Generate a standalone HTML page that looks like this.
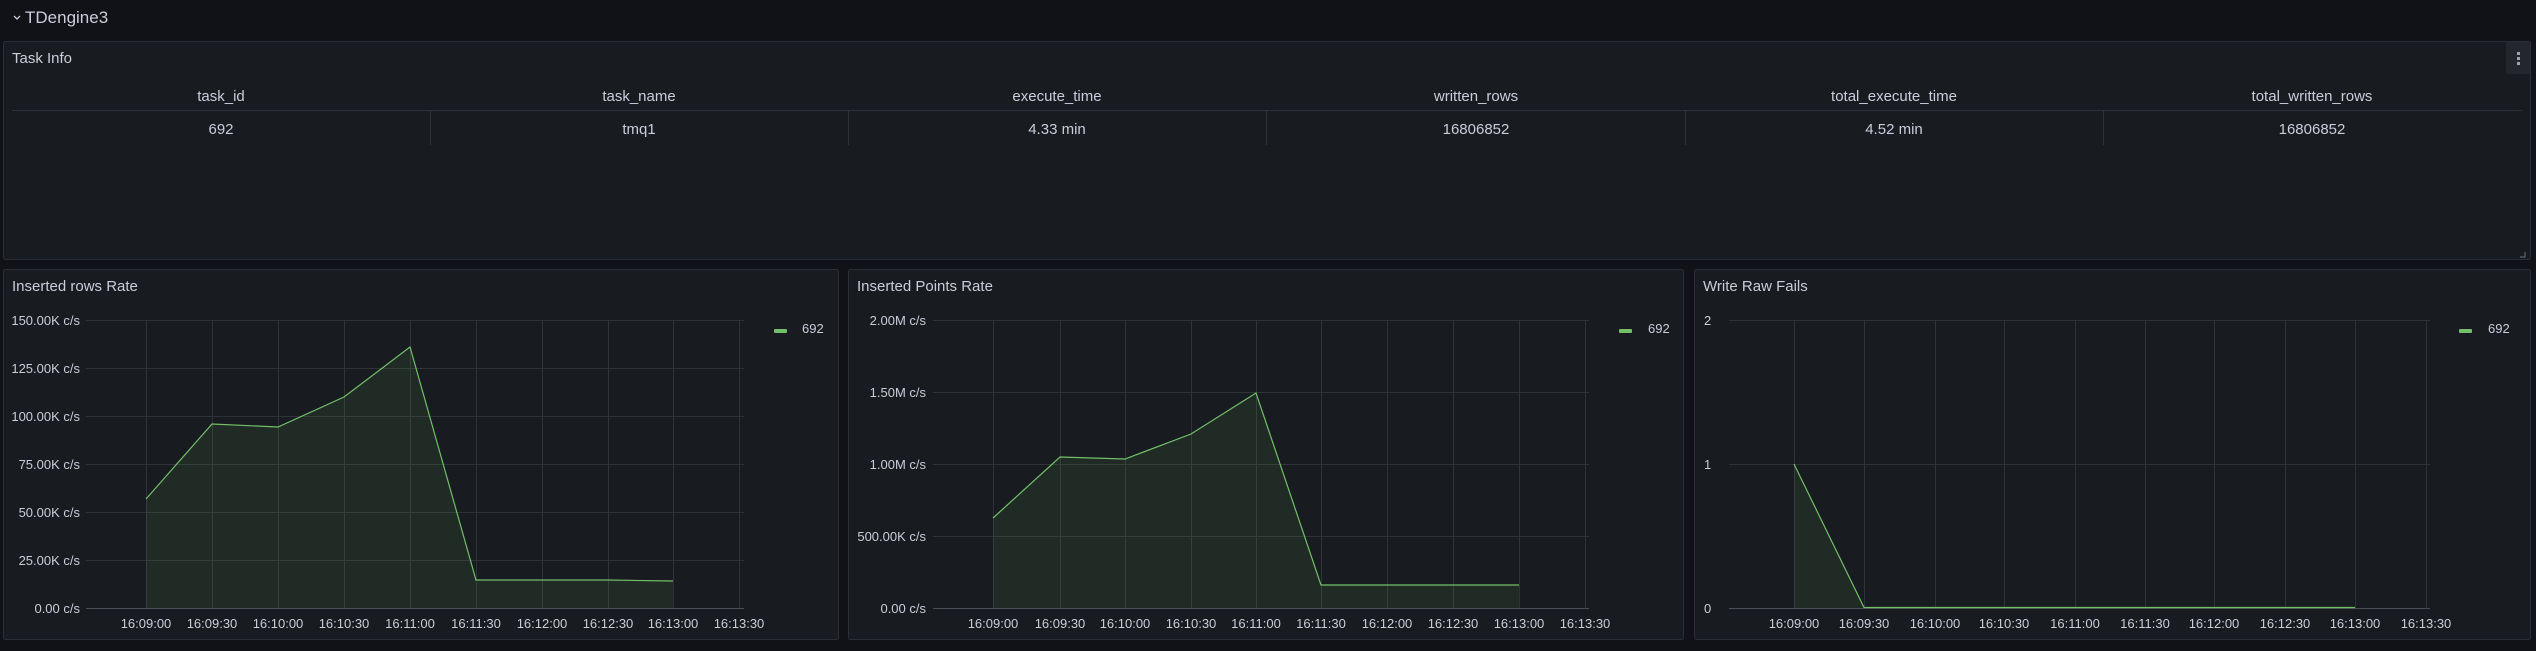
<!DOCTYPE html>
<html><head><meta charset="utf-8"><style>
html,body{margin:0;padding:0;background:#111217;width:2536px;height:651px;overflow:hidden}
svg{display:block}
text{font-family:"Liberation Sans",sans-serif;fill:#ccccdc}
</style></head><body>
<svg width="2536" height="651" viewBox="0 0 2536 651" xmlns="http://www.w3.org/2000/svg">
<rect width="2536" height="651" fill="#111217"/>
<!-- row header -->
<path d="M14 16 l3 3 l3 -3" stroke="#ccccdc" stroke-width="1.3" fill="none"/>
<text x="25" y="23" font-size="17">TDengine3</text>

<!-- Task Info panel -->
<rect x="3.5" y="41.5" width="2527" height="218" rx="2" fill="#181b1f" stroke="#2b2e34"/>
<text x="12" y="63" font-size="15">Task Info</text>
<rect x="2506" y="42" width="24" height="32" rx="2" fill="#23262c"/>
<rect x="2517" y="52" width="3" height="3" fill="#9fa2ab"/>
<rect x="2517" y="57" width="3" height="3" fill="#9fa2ab"/>
<rect x="2517" y="62" width="3" height="3" fill="#9fa2ab"/>
<line x1="12" y1="110.5" x2="2522" y2="110.5" stroke="#2e3138"/>
<g stroke="#2e3138">
<line x1="430.5" y1="111" x2="430.5" y2="145"/>
<line x1="848.5" y1="111" x2="848.5" y2="145"/>
<line x1="1266.5" y1="111" x2="1266.5" y2="145"/>
<line x1="1685.5" y1="111" x2="1685.5" y2="145"/>
<line x1="2103.5" y1="111" x2="2103.5" y2="145"/>
</g>
<g font-size="15" text-anchor="middle">
<text x="221" y="101">task_id</text>
<text x="639" y="101">task_name</text>
<text x="1057" y="101">execute_time</text>
<text x="1476" y="101">written_rows</text>
<text x="1894" y="101">total_execute_time</text>
<text x="2312" y="101">total_written_rows</text>
<text x="221" y="134">692</text>
<text x="639" y="134">tmq1</text>
<text x="1057" y="134">4.33 min</text>
<text x="1476" y="134">16806852</text>
<text x="1894" y="134">4.52 min</text>
<text x="2312" y="134">16806852</text>
</g>
<path d="M2525 252 v5 h-5" stroke="#6e7079" fill="none" stroke-width="1"/>

<!-- Panel 1 -->
<rect x="3.5" y="269.5" width="835" height="370" rx="2" fill="#181b1f" stroke="#2b2e34"/>
<text x="12" y="291" font-size="15">Inserted rows Rate</text>
<g stroke="#2f3237" stroke-width="1">
<line x1="86" y1="320.5" x2="744" y2="320.5"/><line x1="86" y1="368.5" x2="744" y2="368.5"/>
<line x1="86" y1="416.5" x2="744" y2="416.5"/><line x1="86" y1="464.5" x2="744" y2="464.5"/>
<line x1="86" y1="512.5" x2="744" y2="512.5"/><line x1="86" y1="560.5" x2="744" y2="560.5"/>
<line x1="146.5" y1="320" x2="146.5" y2="608"/><line x1="212.5" y1="320" x2="212.5" y2="608"/>
<line x1="278.5" y1="320" x2="278.5" y2="608"/><line x1="344.5" y1="320" x2="344.5" y2="608"/>
<line x1="410.5" y1="320" x2="410.5" y2="608"/><line x1="476.5" y1="320" x2="476.5" y2="608"/>
<line x1="542.5" y1="320" x2="542.5" y2="608"/><line x1="608.5" y1="320" x2="608.5" y2="608"/>
<line x1="673.5" y1="320" x2="673.5" y2="608"/><line x1="739.5" y1="320" x2="739.5" y2="608"/>
</g>
<line x1="86" y1="608.5" x2="744" y2="608.5" stroke="#4a4d54"/>
<path d="M146 499 L212 424 L278 427 L344 397 L410 347 L476 580 L542 580 L608 580 L673 581 L673 608 L146 608 Z" fill="rgba(115,191,105,0.1)"/>
<path d="M146 499 L212 424 L278 427 L344 397 L410 347 L476 580 L542 580 L608 580 L673 581" fill="none" stroke="#73bf69" stroke-width="1.2"/>
<g font-size="13" text-anchor="end">
<text x="80" y="325">150.00K c/s</text><text x="80" y="373">125.00K c/s</text>
<text x="80" y="421">100.00K c/s</text><text x="80" y="469">75.00K c/s</text>
<text x="80" y="517">50.00K c/s</text><text x="80" y="565">25.00K c/s</text>
<text x="80" y="613">0.00 c/s</text>
</g>
<g font-size="13" text-anchor="middle">
<text x="146" y="628">16:09:00</text><text x="212" y="628">16:09:30</text><text x="278" y="628">16:10:00</text>
<text x="344" y="628">16:10:30</text><text x="410" y="628">16:11:00</text><text x="476" y="628">16:11:30</text>
<text x="542" y="628">16:12:00</text><text x="608" y="628">16:12:30</text><text x="673" y="628">16:13:00</text>
<text x="739" y="628">16:13:30</text>
</g>
<rect x="774" y="329" width="13" height="4" rx="1" fill="#73bf69"/>
<text x="802" y="333" font-size="13">692</text>

<!-- Panel 2 -->
<rect x="848.5" y="269.5" width="835" height="370" rx="2" fill="#181b1f" stroke="#2b2e34"/>
<text x="857" y="291" font-size="15">Inserted Points Rate</text>
<g stroke="#2f3237" stroke-width="1">
<line x1="933" y1="320.5" x2="1589" y2="320.5"/><line x1="933" y1="392.5" x2="1589" y2="392.5"/>
<line x1="933" y1="464.5" x2="1589" y2="464.5"/><line x1="933" y1="536.5" x2="1589" y2="536.5"/>
<line x1="993.5" y1="320" x2="993.5" y2="608"/><line x1="1060.5" y1="320" x2="1060.5" y2="608"/>
<line x1="1125.5" y1="320" x2="1125.5" y2="608"/><line x1="1191.5" y1="320" x2="1191.5" y2="608"/>
<line x1="1256.5" y1="320" x2="1256.5" y2="608"/><line x1="1321.5" y1="320" x2="1321.5" y2="608"/>
<line x1="1387.5" y1="320" x2="1387.5" y2="608"/><line x1="1453.5" y1="320" x2="1453.5" y2="608"/>
<line x1="1519.5" y1="320" x2="1519.5" y2="608"/><line x1="1585.5" y1="320" x2="1585.5" y2="608"/>
</g>
<line x1="933" y1="608.5" x2="1589" y2="608.5" stroke="#4a4d54"/>
<path d="M993 518 L1060 457 L1125 459 L1191 434 L1256 393 L1321 585 L1387 585 L1453 585 L1519 585 L1519 608 L993 608 Z" fill="rgba(115,191,105,0.1)"/>
<path d="M993 518 L1060 457 L1125 459 L1191 434 L1256 393 L1321 585 L1387 585 L1453 585 L1519 585" fill="none" stroke="#73bf69" stroke-width="1.2"/>
<g font-size="13" text-anchor="end">
<text x="926" y="325">2.00M c/s</text><text x="926" y="397">1.50M c/s</text>
<text x="926" y="469">1.00M c/s</text><text x="926" y="541">500.00K c/s</text>
<text x="926" y="613">0.00 c/s</text>
</g>
<g font-size="13" text-anchor="middle">
<text x="993" y="628">16:09:00</text><text x="1060" y="628">16:09:30</text><text x="1125" y="628">16:10:00</text>
<text x="1191" y="628">16:10:30</text><text x="1256" y="628">16:11:00</text><text x="1321" y="628">16:11:30</text>
<text x="1387" y="628">16:12:00</text><text x="1453" y="628">16:12:30</text><text x="1519" y="628">16:13:00</text>
<text x="1585" y="628">16:13:30</text>
</g>
<rect x="1619" y="329" width="13" height="4" rx="1" fill="#73bf69"/>
<text x="1648" y="333" font-size="13">692</text>

<!-- Panel 3 -->
<rect x="1694.5" y="269.5" width="836" height="370" rx="2" fill="#181b1f" stroke="#2b2e34"/>
<text x="1703" y="291" font-size="15">Write Raw Fails</text>
<g stroke="#2f3237" stroke-width="1">
<line x1="1729" y1="320.5" x2="2430" y2="320.5"/><line x1="1729" y1="464.5" x2="2430" y2="464.5"/>
<line x1="1794.5" y1="320" x2="1794.5" y2="608"/><line x1="1864.5" y1="320" x2="1864.5" y2="608"/>
<line x1="1935.5" y1="320" x2="1935.5" y2="608"/><line x1="2004.5" y1="320" x2="2004.5" y2="608"/>
<line x1="2075.5" y1="320" x2="2075.5" y2="608"/><line x1="2145.5" y1="320" x2="2145.5" y2="608"/>
<line x1="2214.5" y1="320" x2="2214.5" y2="608"/><line x1="2285.5" y1="320" x2="2285.5" y2="608"/>
<line x1="2355.5" y1="320" x2="2355.5" y2="608"/><line x1="2426.5" y1="320" x2="2426.5" y2="608"/>
</g>
<line x1="1729" y1="608.5" x2="2430" y2="608.5" stroke="#4a4d54"/>
<path d="M1794 464 L1864 608 L1794 608 Z" fill="rgba(115,191,105,0.1)"/>
<path d="M1794 464 L1864 607.5 L2355 607.5" fill="none" stroke="#73bf69" stroke-width="1.2"/>
<g font-size="13">
<text x="1704" y="325">2</text><text x="1704" y="469">1</text><text x="1704" y="613">0</text>
</g>
<g font-size="13" text-anchor="middle">
<text x="1794" y="628">16:09:00</text><text x="1864" y="628">16:09:30</text><text x="1935" y="628">16:10:00</text>
<text x="2004" y="628">16:10:30</text><text x="2075" y="628">16:11:00</text><text x="2145" y="628">16:11:30</text>
<text x="2214" y="628">16:12:00</text><text x="2285" y="628">16:12:30</text><text x="2355" y="628">16:13:00</text>
<text x="2426" y="628">16:13:30</text>
</g>
<rect x="2459" y="329" width="13" height="4" rx="1" fill="#73bf69"/>
<text x="2488" y="333" font-size="13">692</text>
</svg>
</body></html>
